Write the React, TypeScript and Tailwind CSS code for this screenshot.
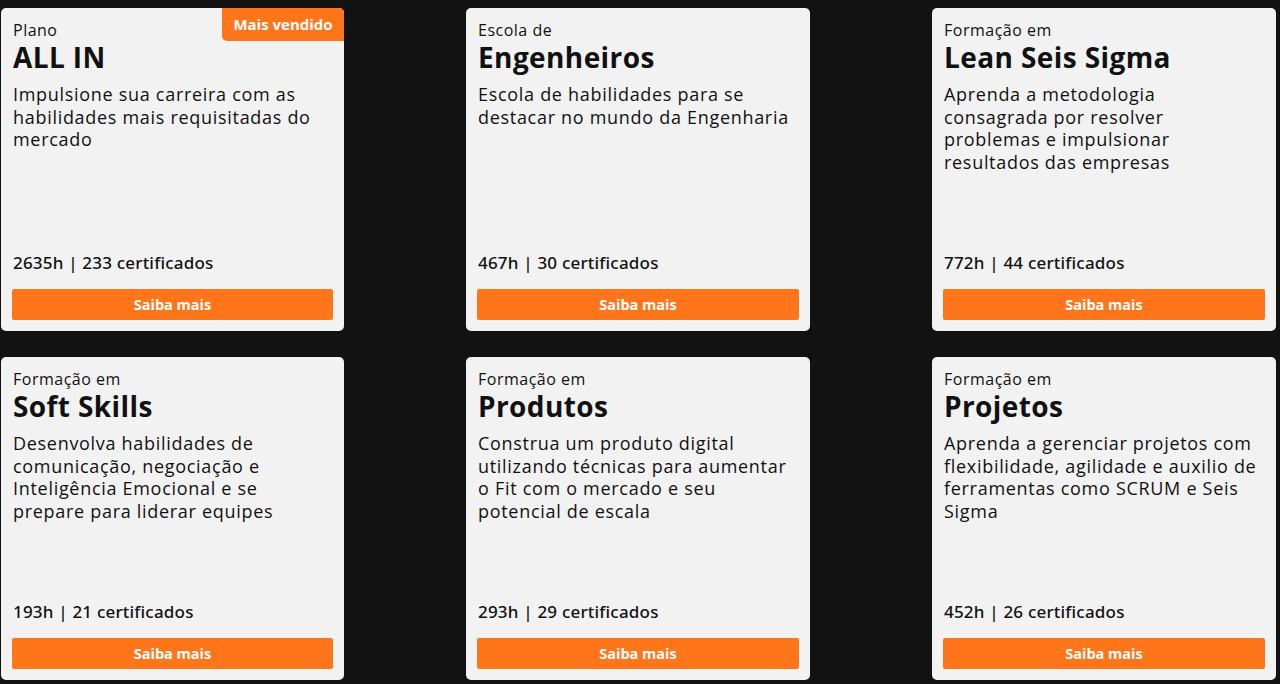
import React from "react";

type Card = {
  pre: string;
  title: string;
  desc: string;
  stats: string;
  badge?: boolean;
};

const cards: Card[] = [
  { pre: "Plano", title: "ALL IN", desc: "Impulsione sua carreira com as habilidades mais requisitadas do mercado", stats: "2635h | 233 certificados", badge: true },
  { pre: "Escola de", title: "Engenheiros", desc: "Escola de habilidades para se destacar no mundo da Engenharia", stats: "467h | 30 certificados" },
  { pre: "Formação em", title: "Lean Seis Sigma", desc: "Aprenda a metodologia consagrada por resolver problemas e impulsionar resultados das empresas", stats: "772h | 44 certificados" },
  { pre: "Formação em", title: "Soft Skills", desc: "Desenvolva habilidades de comunicação, negociação e Inteligência Emocional e se prepare para liderar equipes", stats: "193h | 21 certificados" },
  { pre: "Formação em", title: "Produtos", desc: "Construa um produto digital utilizando técnicas para aumentar o Fit com o mercado e seu potencial de escala", stats: "293h | 29 certificados" },
  { pre: "Formação em", title: "Projetos", desc: "Aprenda a gerenciar projetos com flexibilidade, agilidade e auxilio de ferramentas como SCRUM e Seis Sigma", stats: "452h | 26 certificados" },
];

function CardView({ c }: { c: Card }) {
  return (
    <div className="relative flex h-[323px] flex-col rounded-[5px] bg-[#f2f2f2] px-[11px] pt-[13px] pb-[11px] text-[#111]">
      {c.badge && (
        <div className="absolute right-0 top-0 flex h-[33px] w-[122px] items-center justify-center rounded-tr-[5px] rounded-bl-[5px] bg-[#ff761a] text-[15px] font-bold text-white">
          Mais vendido
        </div>
      )}
      <div className="pl-[1px] text-[16px] leading-[18px] tracking-[0.5px]">{c.pre}</div>
      <div className="mt-[3px] pl-[1px] text-[28px] font-bold leading-[30px] tracking-[0.4px]">{c.title}</div>
      <div className="mt-[11px] pl-[1px] pr-[4px] text-[18px] leading-[22.7px] tracking-[0.7px]">{c.desc}</div>
      <div
        className="mt-auto pl-[1px] text-[17px] font-medium leading-[22px] tracking-[0.2px]"
        style={{ fontFamily: '"Noto Sans", "Open Sans", sans-serif' }}
      >
        {c.stats}
      </div>
      <button className="mt-[15px] h-[31px] w-full rounded-[2px] bg-[#ff761a] text-[14.5px] font-bold text-white">
        Saiba mais
      </button>
    </div>
  );
}

export default function App() {
  return (
    <div
      className="h-[684px] w-[1280px] overflow-hidden bg-[#121212] pl-[1px] pt-[8px]"
      style={{ fontFamily: '"Open Sans", "Noto Sans", sans-serif' }}
    >
      <div className="grid grid-cols-[343px_344px_344px] gap-x-[122px] gap-y-[26px]">
        {cards.map((c) => (
          <CardView key={c.title} c={c} />
        ))}
      </div>
    </div>
  );
}
